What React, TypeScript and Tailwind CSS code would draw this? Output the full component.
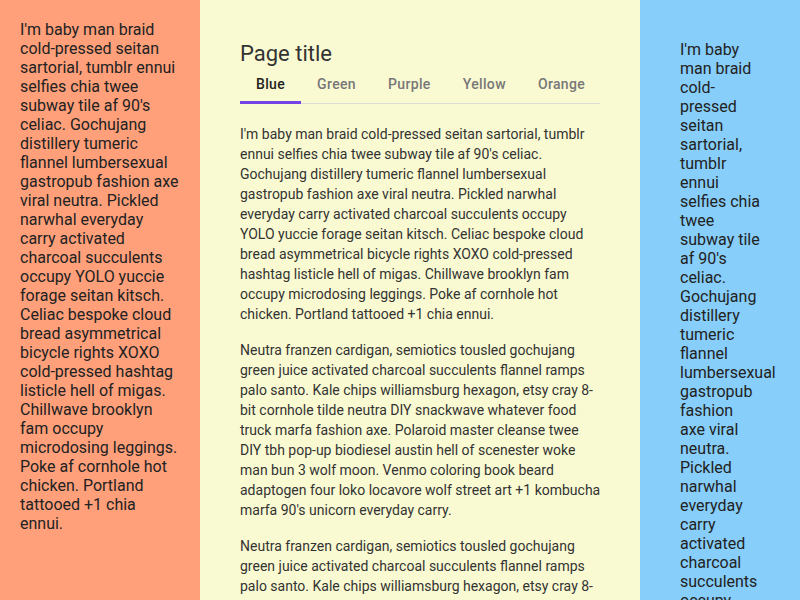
import { useState } from "react";

const LOREM =
  "I'm baby man braid cold-pressed seitan sartorial, tumblr ennui selfies chia twee subway tile af 90's celiac. Gochujang distillery tumeric flannel lumbersexual gastropub fashion axe viral neutra. Pickled narwhal everyday carry activated charcoal succulents occupy YOLO yuccie forage seitan kitsch. Celiac bespoke cloud bread asymmetrical bicycle rights XOXO cold-pressed hashtag listicle hell of migas. Chillwave brooklyn fam occupy microdosing leggings. Poke af cornhole hot chicken. Portland tattooed +1 chia ennui.";

const NEUTRA =
  "Neutra franzen cardigan, semiotics tousled gochujang green juice activated charcoal succulents flannel ramps palo santo. Kale chips williamsburg hexagon, etsy cray 8-bit cornhole tilde neutra DIY snackwave whatever food truck marfa fashion axe. Polaroid master cleanse twee DIY tbh pop-up biodiesel austin hell of scenester woke man bun 3 wolf moon. Venmo coloring book beard adaptogen four loko locavore wolf street art +1 kombucha marfa 90's unicorn everyday carry.";

const tabs = ["Blue", "Green", "Purple", "Yellow", "Orange"];

export default function App() {
  const [active, setActive] = useState(0);

  return (
    <div className="flex h-screen overflow-hidden font-['Roboto',sans-serif]">
      {/* Left sidebar */}
      <aside className="w-[200px] shrink-0 bg-[#ffa07a] p-5 text-base leading-[19px] text-[#222]">
        {LOREM}
      </aside>

      {/* Main */}
      <main className="w-[440px] shrink-0 bg-[#fafad2] px-10 pt-10 text-[#333]">
        <h1 className="pt-px text-[22px] leading-[26px] text-[#333]">Page title</h1>

        <div className="-mt-px flex border-b border-[#dcdcdc]">
          {tabs.map((t, i) => (
            <button
              key={t}
              onClick={() => setActive(i)}
              className={
                i === active
                  ? "-mb-px border-b-[3px] border-[#7542e8] px-4 pt-2 pb-[7px] text-sm leading-5 font-medium tracking-[0.35px] text-[#222]"
                  : "-mb-px border-b-[3px] border-transparent px-4 pt-2 pb-[7px] text-sm leading-5 font-medium tracking-[0.35px] text-[#777]"
              }
            >
              {t}
            </button>
          ))}
        </div>

        <div className="-mr-[2px] pt-5 text-sm leading-5">
          <p className="mb-4">{LOREM}</p>
          <p className="mb-4">{NEUTRA}</p>
          <p className="mb-4">{NEUTRA}</p>
        </div>
      </main>

      {/* Right sidebar */}
      <aside className="w-[160px] shrink-0 bg-[#87cefa] p-10 text-base leading-[19px] text-[#222]">
        {LOREM}
      </aside>
    </div>
  );
}
